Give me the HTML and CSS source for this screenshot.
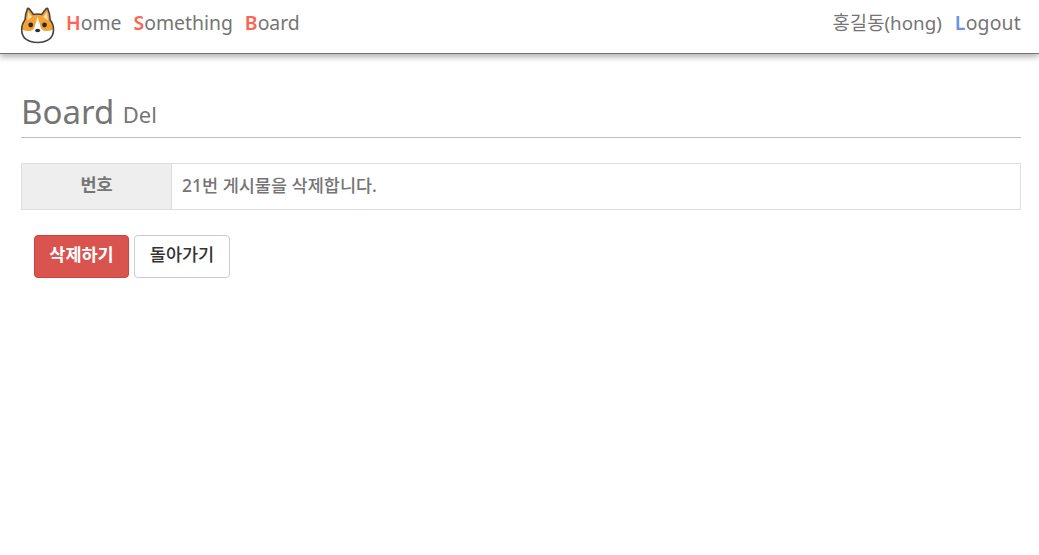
FILE: index.html
```html
<!DOCTYPE html>
<html lang="ko">
<head>
<meta charset="utf-8">
<title>Board Del</title>
<link rel="stylesheet" href="styles.css">
</head>
<body>
<nav class="navbar">
  <div class="nav-group">
    <svg class="logo" width="36" height="38" viewBox="0 0 36 38" aria-hidden="true">
      <path d="M7.500 2.500 Q8.500 2 9.800 3.500 L13.500 8.500 Q17.600 7.500 21.700 8.500 L25.400 3.500 Q26.700 2 27.700 2.500 Q30 8 30.200 14 Q33.500 18 33.500 23.500 Q33.500 36 17.600 36.500 Q1.700 36 1.700 23.500 Q1.700 18 5 14 Q5.200 8 7.500 2.500 Z" fill="#f6a233"/>
      <path d="M17.600 10.500 Q18.500 15 20 18.500 Q20.500 24 25 25 Q29 25.500 33.300 23.500 Q33.500 36 17.600 36.500 Q1.700 36 1.900 23.500 Q6.200 25.500 10.200 25 Q14.700 24 15.200 18.500 Q16.700 15 17.600 10.500 Z" fill="#fff"/>
      <path d="M8.300 6 L12 11 L7.200 14.500 Z M26.900 6 L23.200 11 L28 14.500 Z" fill="#fcdcae"/>
      <circle cx="10.700" cy="19" r="2.400" fill="#2b2b2b"/>
      <circle cx="24.500" cy="19" r="2.400" fill="#2b2b2b"/>
      <ellipse cx="17.600" cy="24.500" rx="2.500" ry="1.800" fill="#2b2b2b"/>
      <path d="M7.500 2.500 Q8.500 2 9.800 3.500 L13.500 8.500 Q17.600 7.500 21.700 8.500 L25.400 3.500 Q26.700 2 27.700 2.500 Q30 8 30.200 14 Q33.500 18 33.500 23.500 Q33.500 36 17.600 36.500 Q1.700 36 1.700 23.500 Q1.700 18 5 14 Q5.200 8 7.500 2.500 Z" fill="none" stroke="#444" stroke-width="1.600" stroke-linejoin="round"/>
    </svg>
    <a class="nav-link" href="#"><span class="cap-red">H</span>ome</a>
    <a class="nav-link" href="#"><span class="cap-red">S</span>omething</a>
    <a class="nav-link" href="#"><span class="cap-red">B</span>oard</a>
  </div>
  <div class="nav-group nav-group-right">
    <span class="nav-link nav-user">홍길동(hong)</span>
    <a class="nav-link nav-logout" href="#"><span class="cap-blue">L</span>ogout</a>
  </div>
</nav>
<main class="content">
  <h1 class="page-title">Board <small class="page-sub">Del</small></h1>
  <table class="detail">
    <tr>
      <th class="detail-head">번호</th>
      <td class="detail-cell">21번 게시물을 삭제합니다.</td>
    </tr>
  </table>
  <div class="actions">
    <button class="btn btn-danger" type="button">삭제하기</button>
    <button class="btn btn-default" type="button">돌아가기</button>
  </div>
</main>
</body>
</html>
```
FILE: styles.css
```css
* { box-sizing: border-box; }
html, body { margin: 0; padding: 0; }
body {
  background: #fff;
  color: #757575;
  font-family: "Noto Sans", "Noto Sans CJK KR", sans-serif;
  font-size: 16px;
  min-height: 555px;
  overflow: hidden;
}
.navbar {
  height: 54px;
  display: flex;
  justify-content: space-between;
  align-items: center;
  padding: 0 18px 7px 20px;
  border-bottom: 1px solid #757575;
  box-shadow: 0 3px 6px rgba(0, 0, 0, 0.3);
}
.nav-group { display: flex; align-items: center; gap: 12px; }
.nav-group-right { gap: 13px; }
.logo { margin: 4px -2px 0 0; display: block; }
.nav-link {
  color: #757575;
  font-size: 19.400px;
  line-height: 26px;
  text-decoration: none;
}
.nav-user { font-size: 18.800px; }
.nav-logout { letter-spacing: 0.2px; }
.cap-red { color: #ff6352; font-weight: 600; }
.cap-blue { color: #6a94ea; font-weight: 600; }
.content { padding: 0 18px 0 21px; }
.page-title {
  margin: 34px 0 25px;
  height: 50px;
  padding: 2px 0 4px;
  border-bottom: 1px solid #bdbdbd;
  font-size: 33px;
  line-height: 43px;
  font-weight: 400;
  color: #757575;
}
.page-sub { font-size: 22px; color: #757575; vertical-align: 1px; }
.detail {
  width: 100%;
  border-collapse: collapse;
  table-layout: fixed;
}
.detail-head, .detail-cell {
  border: 1px solid #dedede;
  height: 46px;
  padding: 0 10px 5px;
  font-size: 17.500px;
  color: #757575;
}
.detail-head { width: 150px; background: #eee; font-weight: 700; text-align: center; padding-bottom: 7px; }
.detail-cell { text-align: left; font-weight: 500; }
.actions { display: flex; gap: 5px; margin: 25px 0 0 13px; }
.btn {
  height: 43px;
  width: 96px;
  padding: 0 0 6px;
  border-radius: 4px;
  border: 1px solid #ccc;
  font-family: inherit;
  font-size: 17.500px;
  font-weight: 500;
}
.btn-danger { width: 95px; background: #d9534f; border-color: #d43f3a; color: #fff; font-weight: 700; }
.btn-default { background: #fff; color: #333; }
```
